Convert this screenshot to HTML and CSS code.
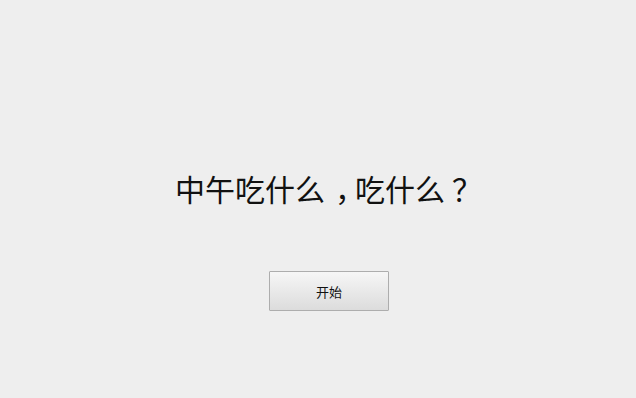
FILE: index.html
```html
<!DOCTYPE html>
<html lang="zh-CN">
<head>
<meta charset="utf-8">
<title>中午吃什么</title>
<link rel="stylesheet" href="styles.css">
</head>
<body>
<main class="page">
  <h1 class="title">中午吃什么<span class="punct punct-comma">，</span>吃什么<span class="punct punct-question">？</span></h1>
  <button class="start-btn" type="button">开始</button>
</main>
</body>
</html>
```

FILE: styles.css
```css
html, body {
  margin: 0;
  padding: 0;
  height: 100%;
  background: #eeeeee;
}
body {
  font-family: "Noto Sans CJK SC", "Noto Sans", sans-serif;
  color: #111111;
}
.page {
  display: flex;
  flex-direction: column;
  align-items: flex-start;
  padding-top: 169px;
  padding-left: 175px;
}
.title {
  margin: 0;
  font-size: 30px;
  font-weight: 400;
  line-height: 38px;
  letter-spacing: 0;
  white-space: nowrap;
}
.punct {
  display: inline-block;
  box-sizing: border-box;
  width: 30px;
  vertical-align: top;
}
.punct-comma {
  padding-left: 10px;
  letter-spacing: -12px;
}
.punct-question {
  padding-left: 7px;
  letter-spacing: -10px;
}
.start-btn {
  margin-top: 64px;
  margin-left: 94px;
  width: 120px;
  height: 40px;
  border: 1px solid #adadad;
  border-radius: 1px;
  background: linear-gradient(#f6f6f6, #dcdcdc);
  font-family: "Noto Sans CJK SC", sans-serif;
  font-size: 13px;
  color: #111111;
  padding: 0;
}
```
